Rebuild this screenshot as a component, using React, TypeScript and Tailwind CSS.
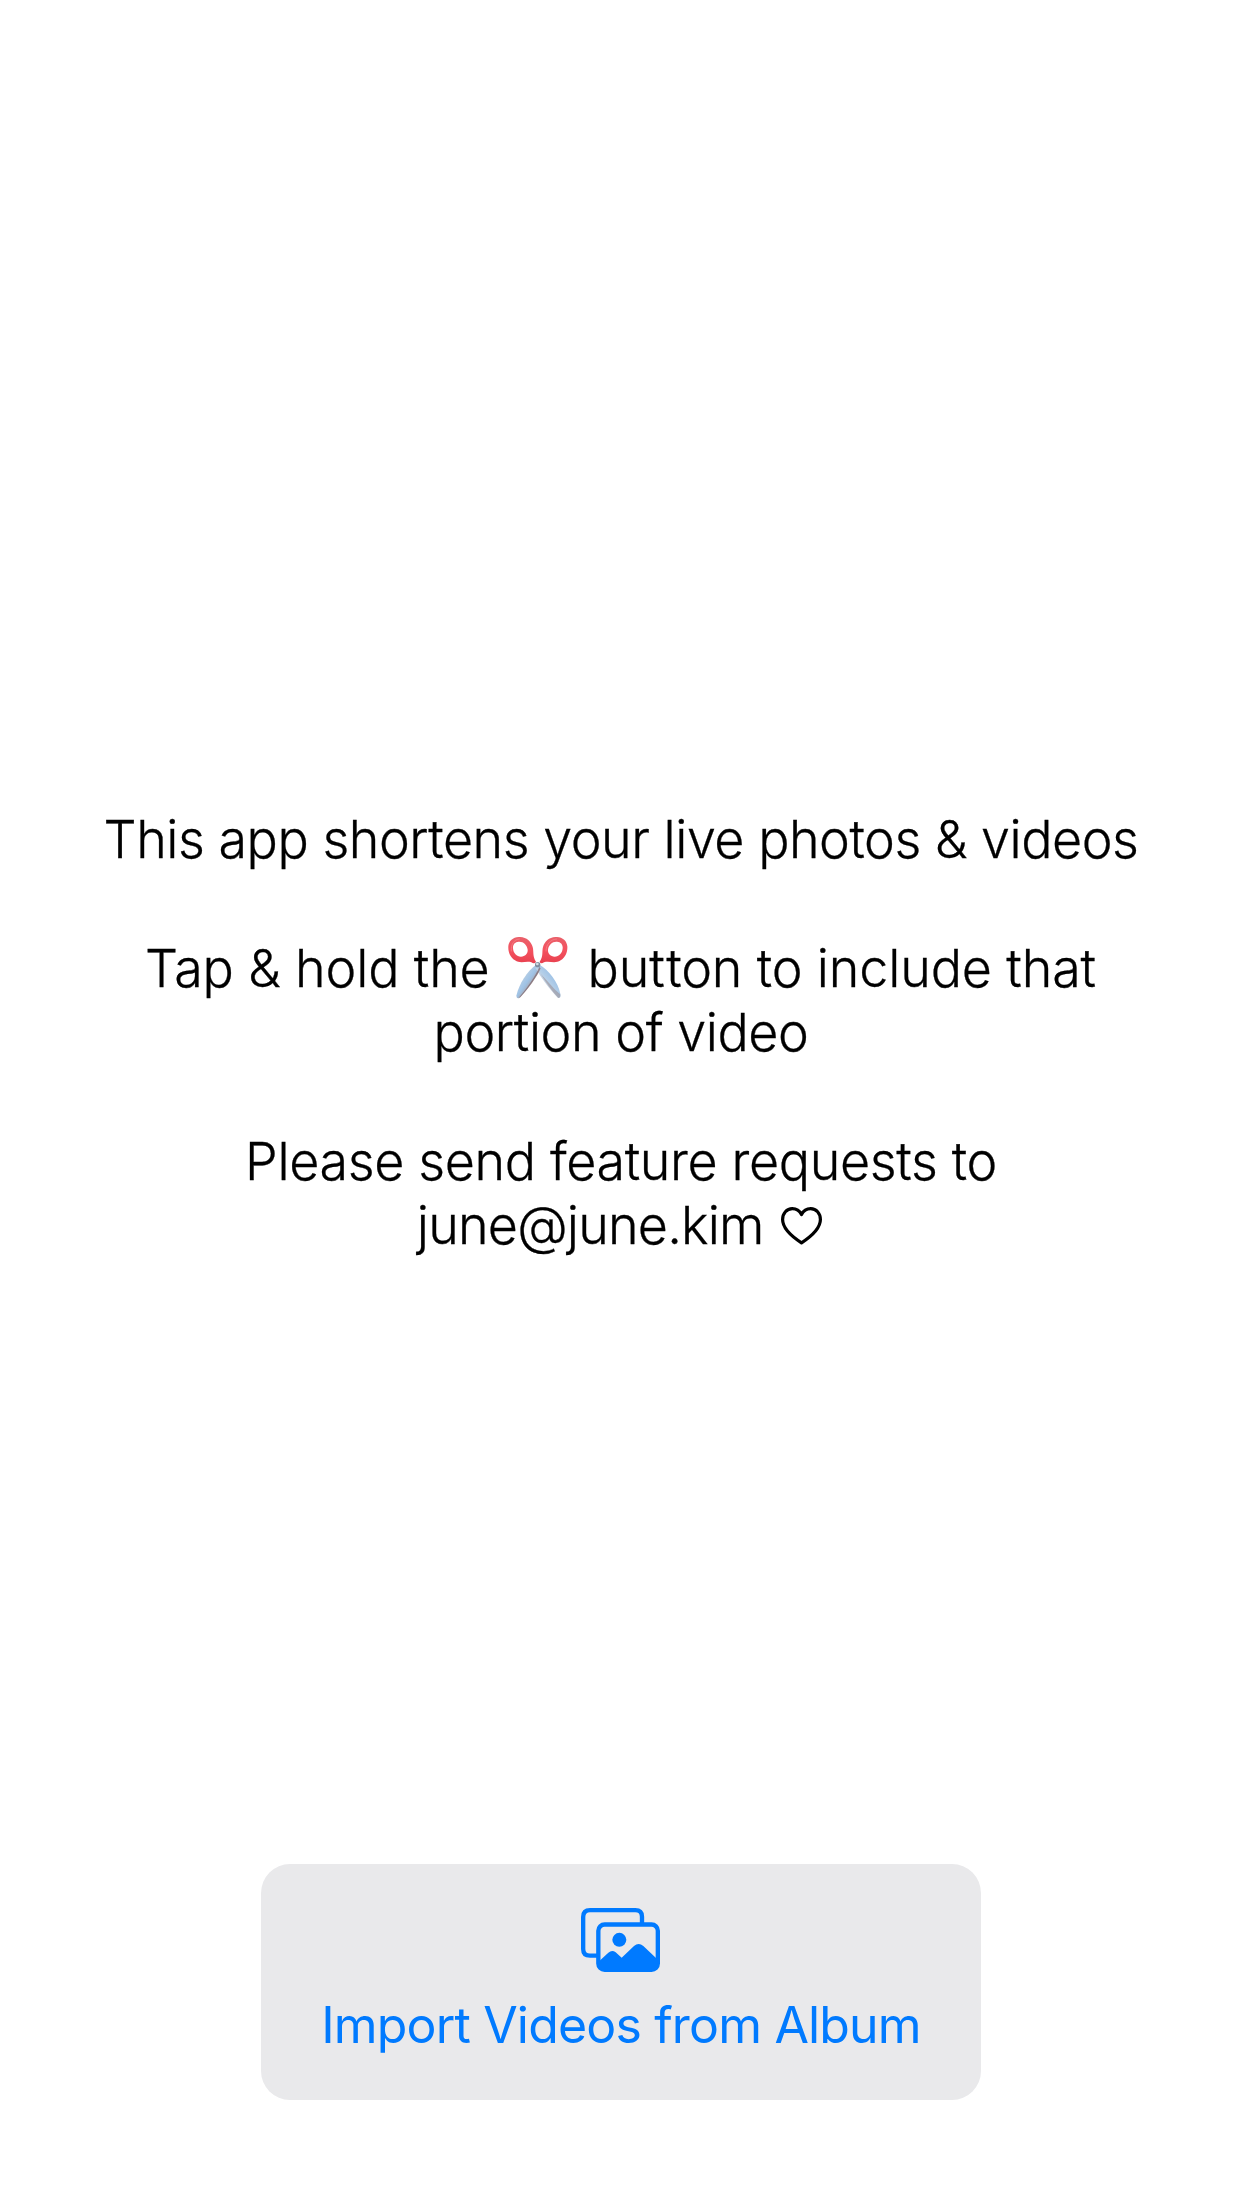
function Scissors() {
  return (
    <svg role="img" aria-label="scissors" viewBox="52 50 180 186" className="mr-[20px] ml-[18px] h-[62px] w-[60px] shrink-0">
      <defs>
        <linearGradient id="bladeLeft" x1="0" y1="0" x2="1" y2="1">
          <stop offset="0.2" stopColor="#c9d6e2" />
          <stop offset="0.48" stopColor="#9fc3e6" />
          <stop offset="0.62" stopColor="#a9a6ae" />
          <stop offset="1" stopColor="#7f6a6a" />
        </linearGradient>
        <linearGradient id="bladeRight" x1="1" y1="0" x2="0" y2="1">
          <stop offset="0.2" stopColor="#8fb9e4" />
          <stop offset="0.5" stopColor="#b5cfe8" />
          <stop offset="0.66" stopColor="#dcd9dc" />
          <stop offset="1" stopColor="#9a8684" />
        </linearGradient>
        <linearGradient id="handle" x1="0" y1="0" x2="0" y2="1">
          <stop offset="0" stopColor="#e9606a" />
          <stop offset="0.5" stopColor="#f4525f" />
          <stop offset="1" stopColor="#e8404f" />
        </linearGradient>
      </defs>
      <path d="M138 132 L150 142 C138 168 112 206 87 232 Q78 237 77 226 C86 190 108 154 138 132Z" fill="url(#bladeLeft)" />
      <path d="M144 132 L134 142 C150 170 176 206 202 233 Q212 234 209 220 C202 186 176 150 144 132Z" fill="url(#bladeRight)" />
      <path d="M146 140 C134 168 108 206 84 232 L89 231 C114 204 140 168 150 144Z" fill="#7f6468" opacity="0.7" />
      <path d="M150 160 C166 188 186 214 203 233 Q210 233 209 222 C196 212 168 180 150 160Z" fill="#8a7274" opacity="0.4" />
      <path
        fillRule="evenodd"
        fill="url(#handle)"
        d="M84 50 C106 49 121 62 126 80 C130 95 125 108 136 124 Q132 133 122 126 C107 121 89 131 73 120 C58 110 52 94 53 78 C54 62 67 51 84 50Z M84 64 C72 65 66 73 67 84 C68 99 78 109 91 109 C104 109 112 100 111 88 C109 73 98 63 84 64Z"
      />
      <path
        fillRule="evenodd"
        fill="url(#handle)"
        d="M199 50 C177 49 162 62 157 80 C153 95 159 108 147 124 Q150 133 160 126 C176 121 194 131 210 120 C225 110 231 94 230 78 C229 62 216 51 199 50Z M199 64 C211 65 217 73 216 84 C215 99 205 109 192 109 C179 109 171 100 172 88 C174 73 185 63 199 64Z"
      />
      <path d="M62 92 C60 72 70 57 86 56 M166 92 C166 72 180 57 198 56" fill="none" stroke="#f98f94" strokeWidth="3" opacity="0.6" strokeLinecap="round" />
      <circle cx="141" cy="133" r="8" fill="#7f8ea0" />
      <circle cx="140" cy="131" r="4" fill="#d5dde5" />
    </svg>
  );
}

function Heart() {
  return (
    <svg role="img" aria-label="heart" viewBox="0 0 41 38" className="mr-[3px] ml-[17.5px] h-[38px] w-[41px] shrink-0">
      <path
        d="M20.5 35.9 C13 31 1.6 22.6 1.6 12.6 C1.6 6.2 5.8 1.7 11.3 1.7 C15.6 1.7 18.8 4.2 20.5 7.6 C22.2 4.2 25.4 1.7 29.7 1.7 C35.2 1.7 39.4 6.2 39.4 12.6 C39.4 22.6 28 31 20.5 35.9Z"
        fill="none"
        stroke="black"
        strokeWidth="3.2"
        strokeLinejoin="round"
      />
    </svg>
  );
}

function AlbumIcon() {
  return (
    <svg aria-hidden="true" viewBox="63 54 237 192" className="mr-px h-16 w-[79px]">
      <path d="M246 100 V80 Q246 60.5 226 60.5 H90 Q69.5 60.5 69.5 81 V177 Q69.5 197 90 197 H112" fill="none" stroke="#007aff" strokeWidth="13" />
      <rect x="115" y="103.5" width="178.500" height="136" rx="19" fill="none" stroke="#007aff" strokeWidth="13" />
      <circle cx="178" cy="149.500" r="21" fill="#007aff" />
      <path d="M118 213 L145 188 Q156 178 167 187 L185 203 L222 168 Q236 156 250 168 L292 208 V224 Q290 242 272 242 H136 Q118 242 116 224Z" fill="#007aff" />
    </svg>
  );
}

const line = "flex h-16 justify-center whitespace-pre";

export default function App() {
  return (
    <main className="flex h-[2208px] w-[1242px] flex-col items-center bg-white font-['Inter',sans-serif] text-black">
      <section className="mt-[808px] flex w-full flex-col gap-[65px] text-[52px] leading-[64px] font-light [-webkit-text-stroke:0.3px_black]">
        <p className={line}>
          <span className="tracking-[-0.47px]">This app shortens your live photos &amp; videos</span>
        </p>
        <div>
          <p className={`${line} pr-px`}>
            <span className="tracking-[-0.15px]">Tap &amp; hold the</span>
            <Scissors />
            <span className="tracking-[-0.15px]">
              bu<span className="tracking-[1.5px]">t</span>ton to include that
            </span>
          </p>
          <p className={line}>
            <span className="tracking-[-0.45px]">portion of video</span>
          </p>
        </div>
        <div>
          <p className={line}>
            <span className="tracking-[-0.36px]">Please send feature requests to</span>
          </p>
          <p className={line}>
            <span className="tracking-[-0.8px]">june@june.kim</span>
            <span className="flex pt-[13px]">
              <Heart />
            </span>
          </p>
        </div>
      </section>
      <button className="mt-auto mb-[108px] flex h-[236px] w-[720px] flex-col items-center rounded-[29px] bg-[#e9e9eb] pt-11 text-[#007aff]">
        <AlbumIcon />
        <span className="mt-[21px] text-[50px] leading-[64px] tracking-[-0.83px] whitespace-nowrap">Import Videos from Album</span>
      </button>
    </main>
  );
}
